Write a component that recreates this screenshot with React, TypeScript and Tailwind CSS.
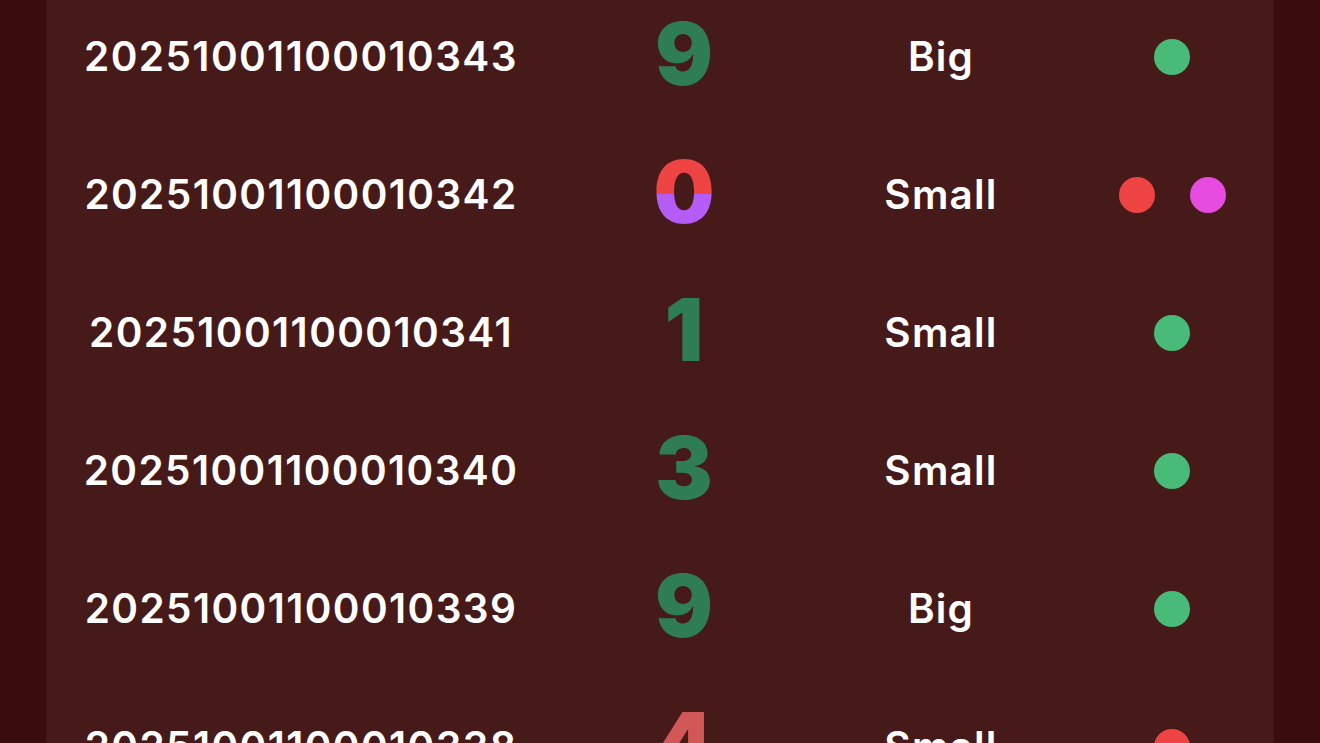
import React from 'react';

type Result = {
  period: string;
  num: number;
  size: 'Big' | 'Small';
  dots: string[];
};

const GREEN_NUM = 'text-[#2f7d55]';
const RED_NUM = 'text-[#d25757]';

// cores dos pontos
const DOT = {
  green: 'bg-[#48bb78]',
  red: 'bg-[#ef4444]',
  violet: 'bg-[#e64ce0]',
};

const rows: Result[] = [
  { period: '20251001100010343', num: 9, size: 'Big', dots: [DOT.green] },
  { period: '20251001100010342', num: 0, size: 'Small', dots: [DOT.red, DOT.violet] },
  { period: '20251001100010341', num: 1, size: 'Small', dots: [DOT.green] },
  { period: '20251001100010340', num: 3, size: 'Small', dots: [DOT.green] },
  { period: '20251001100010339', num: 9, size: 'Big', dots: [DOT.green] },
  { period: '20251001100010338', num: 4, size: 'Small', dots: [DOT.red] },
  { period: '20251001100010337', num: 7, size: 'Big', dots: [DOT.green] },
];

function BigNumber({ n }: { n: number }) {
  if (n === 0) {
    return (
      <span className="bg-[linear-gradient(to_bottom,#ef4444_52%,#b55cf6_52%)] bg-clip-text text-transparent">
        {n}
      </span>
    );
  }
  const color = n % 2 === 1 ? GREEN_NUM : RED_NUM;
  return <span className={color}>{n}</span>;
}

export default function App() {
  return (
    <div className="h-[743px] w-[1320px] overflow-hidden bg-[#3b0c0c] px-[46px] font-['Inter',sans-serif]">
      <div className="h-full overflow-hidden bg-[#471a1a]">
        <div className="-mt-[12px]">
          {rows.map((r) => (
            <div
              key={r.period}
              className="grid h-[138px] grid-cols-[510px_256px_258px_1fr] items-center text-white"
            >
              <div className="text-center text-[40.5px] font-semibold tracking-[1.4px]">{r.period}</div>
              <div className="-mt-[6px] text-center text-[86px] leading-none font-black">
                <BigNumber n={r.num} />
              </div>
              <div className="text-center text-[40.5px] font-semibold tracking-[1.2px]">{r.size}</div>
              <div className="flex items-center justify-center gap-[35px]">
                {r.dots.map((d, i) => (
                  <span key={i} className={`h-[36px] w-[36px] rounded-full ${d}`} />
                ))}
              </div>
            </div>
          ))}
        </div>
      </div>
    </div>
  );
}
